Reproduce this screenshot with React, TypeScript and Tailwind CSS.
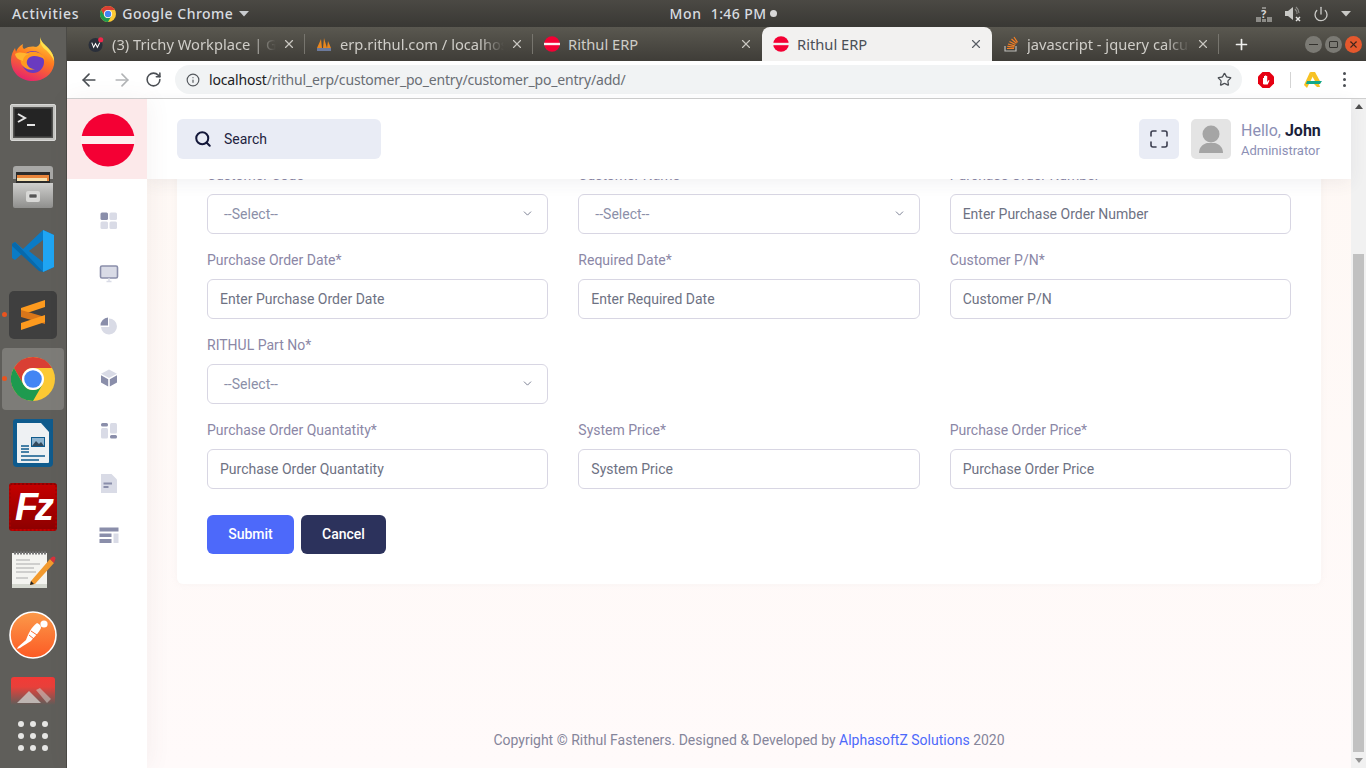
import { ArrowLeft, ArrowRight, RotateCw, Info, Star, X, Plus, Search, ChevronDown, Power } from "lucide-react";

const ui = { fontFamily: '"Noto Sans", sans-serif' };

function Caret({ className = "" }: { className?: string }) {
  return (
    <svg width="10" height="6" viewBox="0 0 10 6" className={className}>
      <path d="M0 0h10L5 5.500z" fill="currentColor" />
    </svg>
  );
}

function Rithul({ size = 16, band = "#fdf0f0" }: { size?: number; band?: string }) {
  return (
    <svg width={size} height={size} viewBox="0 0 54 54">
      <circle cx="27" cy="27" r="26.500" fill="#f40034" />
      <rect x="0" y="23" width="54" height="8" fill={band} />
    </svg>
  );
}

function ChromeLogo({ size = 44 }: { size?: number }) {
  return (
    <svg width={size} height={size} viewBox="0 0 48 48">
      <circle cx="24" cy="24" r="24" fill="#fcc934" />
      <path d="M24 0A24 24 0 0 1 44.78 12H24A12 12 0 0 0 13.6 30L3.2 12A24 24 0 0 1 24 0z" fill="#d93f34" />
      <path d="M3.2 12L13.6 30A12 12 0 0 0 34.4 30L24 48A24 24 0 0 1 3.2 12z" fill="#1e9a4f" />
      <circle cx="24" cy="24" r="12" fill="#fff" />
      <circle cx="24" cy="24" r="9.6" fill="#4285f4" />
    </svg>
  );
}

function Firefox() {
  return (
    <svg width="46" height="46" viewBox="0 0 46 46">
      <defs>
        <linearGradient id="ff1" x1="0.7" y1="0" x2="0.3" y2="1">
          <stop offset="0" stopColor="#ffd83a" />
          <stop offset="0.45" stopColor="#ff7a1f" />
          <stop offset="1" stopColor="#e5206f" />
        </linearGradient>
      </defs>
      <path d="M30 1c1 5 4 7 8 11 5 5 7 11 6 17-2 10-11 16-21 16C11 45 1 37 1 24c0-5 2-9 4-12l1 4c1-3 3-6 7-8-1 3 0 4 1 5 4-3 10-3 12-2C31 9 31 5 30 1z" fill="url(#ff1)" />
      <path d="M30 1c1 5 4 7 8 11 4 4 6 8 6 13-2-5-5-8-8-11-3-2-6-5-6-13z" fill="#ffe14d" />
      <circle cx="23" cy="26" r="11" fill="#6a3bc0" />
      <path d="M12 21c3-4 9-6 14-5 5 1 8 4 9 8-3-3-7-4-11-4-5 0-8 4-7 8 1 3 4 5 8 5-6 2-12-1-14-6-1-2 0-4 1-6z" fill="#ff9a1f" />
      <path d="M5 18c1 5 5 6 8 7 0-3 2-6 6-7-5-1-9-3-14 0z" fill="#ffb52e" />
    </svg>
  );
}

function Terminal() {
  return (
    <svg width="46" height="38" viewBox="0 0 46 38">
      <rect x="0.500" y="0.500" width="45" height="36" rx="1.500" fill="#c4c4c1" stroke="#d8d8d6" />
      <rect x="3" y="3" width="40" height="31" fill="#525250" />
      <rect x="4.500" y="4.500" width="37" height="28" fill="#242424" />
      <path d="M8 10l7 4-7 4" fill="none" stroke="#e6e6e6" strokeWidth="2" />
      <rect x="17" y="20" width="8" height="2" fill="#e6e6e6" />
    </svg>
  );
}

function Files() {
  return (
    <svg width="42" height="44" viewBox="0 0 42 44">
      <defs>
        <linearGradient id="fl" x1="0" y1="0" x2="0" y2="1">
          <stop offset="0" stopColor="#cfcfcd" />
          <stop offset="1" stopColor="#8f8f8d" />
        </linearGradient>
      </defs>
      <path d="M1 4q0-3 3-3h34q3 0 3 3v10H1z" fill="#a8a8a6" />
      <rect x="4" y="7" width="34" height="14" fill="#2b2b2b" />
      <rect x="5" y="10" width="32" height="6" fill="#e8843a" />
      <rect x="5" y="13" width="30" height="3" fill="#f5e1b0" />
      <path d="M1 18h40v23q0 2-2 2H3q-2 0-2-2z" fill="url(#fl)" />
      <rect x="14" y="26" width="14" height="11" rx="2" fill="#d8d8d6" />
      <rect x="17" y="29" width="8" height="4" rx="1" fill="#555" stroke="#eee" strokeWidth="0.6" />
    </svg>
  );
}

function VSCode() {
  return (
    <svg width="44" height="44" viewBox="0 0 44 44">
      <path d="M32 1L43 6v32l-11 5-20-19L4 31l-3-2V15l3-2 8 7z" fill="#0a7bc6" />
      <path d="M32 1L43 6v32l-11 5z" fill="#1fa5f3" />
      <path d="M32 11L18 22l14 11z" fill="#5f5e5a" />
      <path d="M1 15l3-2 28 30-4-1L1 17z" fill="#0869ab" />
    </svg>
  );
}

function Sublime() {
  return (
    <div className="flex h-12 w-12 items-center justify-center rounded-[5px] bg-[#3f3f3f]">
      <svg width="26" height="32" viewBox="0 0 26 32">
        <path d="M1 9L25 1v7L1 16z" fill="#fd9a1e" />
        <path d="M1 11l24 7v7L1 18z" fill="#d9761a" />
        <path d="M1 24l24-8v7L1 31z" fill="#fd9a1e" />
      </svg>
    </div>
  );
}

function Writer() {
  return (
    <svg width="40" height="48" viewBox="0 0 40 48">
      <path d="M3 0h37v44q0 4-4 4H4q-4 0-4-4V3q0-3 3-3z" fill="#0f5b8d" />
      <path d="M4 4h24l8 9v30q0 1-1 1H5q-1 0-1-1z" fill="#eef1f3" />
      <path d="M28 0h12v14z" fill="#0f5b8d" />
      <path d="M8 27h8M8 30h8M8 33h8" stroke="#0f5b8d" strokeWidth="1.6" />
      <path d="M8 37h24M8 41h18" stroke="#0f5b8d" strokeWidth="1.6" />
      <rect x="18" y="18" width="14" height="10" fill="#0f5b8d" />
      <rect x="19" y="19" width="12" height="8" fill="#8fb4cf" />
      <path d="M19 27l4-5 3 3 2-2 3 4z" fill="#33495c" />
    </svg>
  );
}

function FileZilla() {
  return (
    <div className="flex h-12 w-12 items-center justify-center overflow-hidden rounded-[3px] border-2 border-dotted border-[#a80000] bg-gradient-to-b from-[#c40000] to-[#8e0000]">
      <span className="text-[38px] font-bold italic leading-none tracking-[-3px] text-white" style={{ fontFamily: '"Liberation Sans", sans-serif' }}>
        Fz
      </span>
    </div>
  );
}

function Gedit() {
  return (
    <svg width="46" height="40" viewBox="0 0 46 40">
      <rect x="2" y="2" width="35" height="35" fill="#f4f4f0" />
      <rect x="2" y="33" width="35" height="4" fill="#d5d8d0" />
      <path d="M4 2h32" stroke="#777" strokeWidth="3" strokeDasharray="2 1" />
      <path d="M6 9h14M6 13h24M6 17h18M6 21h20M6 27h12" stroke="#aaa" strokeWidth="1" />
      <path d="M21 30L40 8l4 4-19 21-5 1z" fill="#f29a2e" />
      <path d="M40 8l2-2q2-1 3 0t0 3l-1 3z" fill="#d8323c" />
      <path d="M21 30l-1 4 4-1z" fill="#222" />
    </svg>
  );
}

function Postman() {
  return (
    <svg width="48" height="48" viewBox="0 0 48 48">
      <defs>
        <linearGradient id="pm" x1="0" y1="0" x2="0" y2="1">
          <stop offset="0" stopColor="#fb9a4a" />
          <stop offset="1" stopColor="#fc5a24" />
        </linearGradient>
      </defs>
      <circle cx="24" cy="24" r="23" fill="url(#pm)" stroke="#fff" strokeWidth="1.6" />
      <circle cx="35" cy="13" r="3.6" fill="#fff" />
      <path d="M28 12c3 1 4 3 4 5-2 5-7 9-10 13-3 2-7 4-11 7l-3 1 1-2 8-7c2-5 5-13 11-17z" fill="#fff" />
      <path d="M22 20l6 4M20 24l5 4" stroke="#fc6a30" strokeWidth="1" />
    </svg>
  );
}

function Mountain() {
  return (
    <svg width="44" height="28" viewBox="0 0 44 28">
      <defs>
        <linearGradient id="mf" x1="0" y1="0" x2="0" y2="1">
          <stop offset="0" stopColor="#f23a36" />
          <stop offset="0.35" stopColor="#e8403a" />
          <stop offset="1" stopColor="#5f5e5a" />
        </linearGradient>
      </defs>
      <path d="M0 3q0-3 3-3h38q3 0 3 3v25H0z" fill="url(#mf)" />
      <path d="M6 26l12-12 12 12z" fill="#c9c6c2" opacity="0.85" />
      <path d="M25 13l4-2 11 11-4 4z" fill="#c9c6c2" opacity="0.6" />
    </svg>
  );
}

const D = "#8a8eaa";
const L = "#d9dbe6";

function SideIcon({ n }: { n: number }) {
  const s = { width: 20, height: 20, viewBox: "0 0 20 20" };
  if (n === 0)
    return (
      <svg {...s}>
        <rect x="1.500" y="1.500" width="7.500" height="7.500" rx="1.500" fill={D} />
        <rect x="10.500" y="1.500" width="7.500" height="7.500" rx="1.500" fill={L} />
        <rect x="1.500" y="10.500" width="7.500" height="7.500" rx="1.500" fill={L} />
        <rect x="10.500" y="10.500" width="7.500" height="7.500" rx="1.500" fill={L} />
      </svg>
    );
  if (n === 1)
    return (
      <svg {...s}>
        <rect x="1.500" y="3" width="17" height="12" rx="1.500" fill={L} stroke={D} strokeWidth="1.6" />
        <path d="M10 15v3M7.500 18.500h5" stroke={L} strokeWidth="1.4" />
      </svg>
    );
  if (n === 2)
    return (
      <svg {...s}>
        <path d="M10 2.500a8 8 0 1 1-8 8.500h8.200z" fill={L} />
        <path d="M9 1.500v8H1.500A8 8 0 0 1 9 1.500z" fill={D} />
      </svg>
    );
  if (n === 3)
    return (
      <svg {...s}>
        <path d="M10 1.500l8 4.200L10 10 2 5.700z" fill={L} />
        <path d="M2 7.200l7.200 4v7.300L2 14.500zM18 7.200l-7.200 4v7.300l7.200-4z" fill={D} />
      </svg>
    );
  if (n === 4)
    return (
      <svg {...s}>
        <rect x="2" y="2" width="7" height="3.600" rx="1.500" fill={D} />
        <rect x="2" y="7" width="7" height="10.500" rx="1.500" fill={L} />
        <rect x="11" y="2" width="7" height="10.500" rx="1.500" fill={L} />
        <rect x="11" y="14" width="7" height="3.600" rx="1.500" fill={D} />
      </svg>
    );
  if (n === 5)
    return (
      <svg {...s}>
        <path d="M2 1h10.500L18 6.500V20H2z" fill={L} />
        <rect x="4.500" y="9.500" width="8.500" height="2" fill={D} />
        <rect x="4.500" y="13" width="5" height="2" fill={D} />
      </svg>
    );
  return (
    <svg {...s}>
      <rect x="0.500" y="1.500" width="19" height="4" fill={D} />
      <rect x="0.500" y="7.500" width="12" height="3.500" fill={D} />
      <rect x="0.500" y="13" width="12" height="4" fill={D} />
      <rect x="14.500" y="7.500" width="5" height="9.500" fill={L} />
    </svg>
  );
}

function Tab({ title, icon, active, width, sep = true }: { title: string; icon: React.ReactNode; active?: boolean; width: number; sep?: boolean }) {
  return (
    <div
      className={`relative flex h-[34px] shrink-0 items-center pl-[11px] pr-[9px] ${active ? "rounded-t-[8px] bg-[#f2f1f0] text-[#4a4f57]" : "text-[#cfcdc8]"}`}
      style={{ width }}
    >
      <div className="flex w-[16px] shrink-0 items-center justify-center">{icon}</div>
      <div className={`ml-[8px] min-w-0 flex-1 overflow-hidden whitespace-nowrap text-[14.7px] leading-[31px] ${title.length > 12 ? "[mask-image:linear-gradient(to_right,black_85%,transparent)]" : ""}`}>
        {title}
      </div>
      <X size={14} strokeWidth={2} className={`ml-[6px] shrink-0 ${active ? "text-[#5a5f66]" : "text-[#c8c6c0]"}`} />
      {sep && !active && <div className="absolute right-0 top-[7px] h-[20px] w-px bg-[#77756e]" />}
    </div>
  );
}

function Field({ label, placeholder, select }: { label: string; placeholder: string; select?: boolean }) {
  return (
    <div className="mt-[16px]">
      <div className="mb-[8px] h-[21px] text-[14px] leading-[21px] text-[#8b87a6]">{label}</div>
      {select ? (
        <div className="flex h-[40px] items-center justify-between rounded-[6px] border border-[#d8d6e3] bg-white pl-[16px] pr-[13px] text-[14px] text-[#8b8fa8]">
          <span>{placeholder}</span>
          <ChevronDown size={13} strokeWidth={1.6} className="mb-[2px] text-[#6a6f85]" />
        </div>
      ) : (
        <input
          readOnly
          placeholder={placeholder}
          className="block h-[40px] w-full rounded-[6px] border border-[#d8d6e3] bg-white px-[12px] text-[14px] outline-none placeholder:text-[#6e7283]"
        />
      )}
    </div>
  );
}

function App() {
  return (
    <div className="flex h-screen w-full flex-col overflow-hidden bg-[#5f5e5a]" style={{ fontFamily: "Roboto, sans-serif" }}>
      {/* GNOME top bar */}
      <div className="flex h-[27px] shrink-0 items-center bg-gradient-to-b from-[#4b4944] to-[#393834] text-[14px] font-medium tracking-[0.7px] text-[#d8dce0]" style={ui}>
        <span className="ml-[12px]">Activities</span>
        <div className="ml-[21px]"><ChromeLogo size={16} /></div>
        <span className="ml-[6px] tracking-[0.5px]">Google Chrome</span>
        <Caret className="ml-[6px] text-[#c9cccf]" />
        <div className="ml-[420px] flex items-center">
          <span>Mon</span>
          <span className="ml-[9px] tracking-[0.4px]">1:46 PM</span>
          <span className="ml-[4px] h-[7px] w-[7px] rounded-full bg-[#d8d8d8]" />
        </div>
        <div className="ml-auto mr-[15px] flex items-center text-[#c9c9c6]">
          <svg width="16" height="16" viewBox="0 0 16 16">
            <path d="M0 11h5v5H0zM6 13h4v3H6zM11 11h5v5h-5zM6 1h4v2H6z" fill="#8c8b87" />
            <text x="5" y="12" fontSize="11" fontWeight="700" fill="#d8d8d6">?</text>
          </svg>
          <svg width="18" height="16" viewBox="0 0 18 16" className="ml-[12px]">
            <path d="M1 5h3l5-4v13L4 10H1z" fill="#c9c9c6" />
            <path d="M11 3a6 6 0 0 1 2 5M12 1a8 8 0 0 1 3 6" stroke="#8c8b87" strokeWidth="1.2" fill="none" />
            <path d="M12 11l4 4M16 11l-4 4" stroke="#e4e4e2" strokeWidth="1.5" />
          </svg>
          <Power size={16} strokeWidth={2} className="ml-[11px]" />
          <Caret className="ml-[12px]" />
        </div>
      </div>

      <div className="flex min-h-0 flex-1">
        {/* Dock */}
        <div className="flex w-[67px] shrink-0 flex-col overflow-hidden border-r border-[#4a4945] bg-[#5f5e5a]">
          <div className="flex h-[64px] items-center justify-center"><Firefox /></div>
          <div className="flex h-[64px] items-center justify-center"><Terminal /></div>
          <div className="flex h-[64px] items-center justify-center"><Files /></div>
          <div className="flex h-[64px] items-center justify-center"><VSCode /></div>
          <div className="relative flex h-[64px] items-center justify-center">
            <Sublime />
            <span className="absolute left-[2px] top-[29px] h-[5px] w-[5px] rounded-full bg-[#e9541f]" />
          </div>
          <div className="relative flex h-[64px] items-center justify-center">
            <div className="flex h-[62px] w-[62px] items-center justify-center rounded-[4px] bg-[#7d7c78]"><ChromeLogo /></div>
            <span className="absolute left-[2px] top-[29px] h-[5px] w-[5px] rounded-full bg-[#e9541f]" />
          </div>
          <div className="flex h-[64px] items-center justify-center"><Writer /></div>
          <div className="flex h-[64px] items-center justify-center"><FileZilla /></div>
          <div className="flex h-[64px] items-center justify-center"><Gedit /></div>
          <div className="flex h-[64px] items-center justify-center"><Postman /></div>
          <div className="flex h-[38px] items-start justify-center pt-[10px]"><Mountain /></div>
          <div className="grid grid-cols-3 justify-items-center gap-y-[6px] px-[15px] pt-[16px]">
            {Array.from({ length: 9 }).map((_, i) => (
              <span key={i} className="h-[6px] w-[6px] rounded-full bg-[#e6e6e4]" />
            ))}
          </div>
        </div>

        {/* Chrome window */}
        <div className="flex min-w-0 flex-1 flex-col">
          <div className="flex h-[34px] shrink-0 items-center bg-gradient-to-b from-[#5a5850] to-[#3f3d38] pl-[10px]" style={ui}>
            <Tab
              width={228}
              title="(3) Trichy Workplace | Gr"
              icon={
                <svg width="17" height="17" viewBox="0 0 17 17">
                  <circle cx="8" cy="9" r="7.500" fill="#2a2f3a" />
                  <path d="M4 6.500l2 5 2-4 2 4 2.500-5" fill="none" stroke="#fff" strokeWidth="1.100" />
                  <circle cx="13.500" cy="3.500" r="2.700" fill="#f0284a" />
                </svg>
              }
            />
            <Tab
              width={228}
              title="erp.rithul.com / localhost"
              icon={
                <svg width="16" height="16" viewBox="0 0 16 16">
                  <path d="M1 12L5 3l1 9zM7 12l1-10 3 10zM11 12l1-7 3 7z" fill="#e8861e" />
                  <rect x="1" y="12" width="14" height="3" fill="#6c7a9c" />
                </svg>
              }
            />
            <Tab width={229} title="Rithul ERP" icon={<Rithul />} sep={false} />
            <Tab width={230} title="Rithul ERP" icon={<Rithul band="#f2f1f0" />} active />
            <Tab
              width={227}
              title="javascript - jquery calcul"
              icon={
                <svg width="16" height="16" viewBox="0 0 16 16">
                  <path d="M2 10v5h11v-5" fill="none" stroke="#bcbbb8" strokeWidth="1.2" />
                  <path d="M4 12.500h7M4.300 10.300l7 .8M5 8l6.800 1.800M6.500 5.500l6 3M8.500 3l5 4.300M11 1l3.500 5.300" stroke="#f47f24" strokeWidth="1.2" />
                </svg>
              }
            />
            <Plus size={17} strokeWidth={2.4} className="ml-[14px] text-[#f0f0ee]" />
            <div className="ml-auto mr-[4px] flex items-center gap-[3px]">
              <span className="flex h-[17px] w-[17px] items-center justify-center rounded-full bg-[#7b7a74]"><span className="h-px w-[9px] bg-[#33322e]" /></span>
              <span className="flex h-[17px] w-[17px] items-center justify-center rounded-full bg-[#7b7a74]"><span className="h-[7px] w-[9px] rounded-[1px] border border-[#33322e]" /></span>
              <span className="flex h-[17px] w-[17px] items-center justify-center rounded-full bg-[#e5582d]"><X size={11} strokeWidth={2.4} className="text-[#41251b]" /></span>
            </div>
          </div>

          {/* Toolbar */}
          <div className="flex h-[38px] shrink-0 items-center border-b border-[#cfcfcf] bg-white" style={ui}>
            <ArrowLeft size={20} strokeWidth={2} className="ml-[12px] text-[#4b4f54]" />
            <ArrowRight size={20} strokeWidth={2} className="ml-[13px] text-[#b2b4b6]" />
            <RotateCw size={17} strokeWidth={2.2} className="ml-[13px] text-[#4b4f54]" />
            <div className="ml-[13px] flex h-[29px] w-[1067px] items-center rounded-full bg-[#f1f3f4]">
              <Info size={14} strokeWidth={2} className="ml-[11px] text-[#55595e]" />
              <span className="ml-[9px] text-[14px] tracking-[-0.17px] text-[#6a6e74]">
                <span className="text-[#202124]">localhost</span>/rithul_erp/customer_po_entry/customer_po_entry/add/
              </span>
              <Star size={15} strokeWidth={2} className="ml-auto mr-[10px] text-[#4b4f54]" />
            </div>
            <svg width="18" height="18" viewBox="0 0 18 18" className="ml-[15px]">
              <path d="M5.500 1h7L17 5.500v7L12.500 17h-7L1 12.500v-7z" fill="#e60012" />
              <path d="M6 13V7h1v3V5h1v5V4.500h1.200V10V5h1v6l1.500-2 .8.5-1.800 4H7z" fill="#fff" />
            </svg>
            <div className="ml-[15px] h-[16px] w-px bg-[#d4d4d4]" />
            <svg width="20" height="18" viewBox="0 0 20 18" className="ml-[12px]">
              <path d="M7 1h5l6 11h-5z" fill="#f7c224" />
              <path d="M7 1L1 14l3 3L10 5z" fill="#f7c224" />
              <path d="M4 10h15l-2 3H3z" fill="#14a88a" />
              <path d="M11 13h5l1 3h-3z" fill="#f7c224" />
            </svg>
            <div className="ml-[20px] flex flex-col gap-[3px]">
              <span className="h-[3px] w-[3px] rounded-full bg-[#4b4f54]" />
              <span className="h-[3px] w-[3px] rounded-full bg-[#4b4f54]" />
              <span className="h-[3px] w-[3px] rounded-full bg-[#4b4f54]" />
            </div>
          </div>

          {/* Page */}
          <div className="flex min-h-0 flex-1">
            <div className="relative z-20 flex w-[80px] shrink-0 flex-col bg-white shadow-[2px_0_22px_rgba(120,90,90,0.07)]">
              <div className="flex h-[80px] items-center justify-center bg-[#fce9ea] pl-[1px] pt-[1px]"><Rithul size={54} band="#fdeff0" /></div>
              <div className="flex flex-col items-center gap-[32.5px] pl-[3px] pt-[31.5px]">
                {[0, 1, 2, 3, 4, 5, 6].map((n) => (
                  <div key={n} className="h-[20px] w-[20px]"><SideIcon n={n} /></div>
                ))}
              </div>
            </div>

            <div className="flex min-w-0 flex-1 flex-col bg-gradient-to-b from-[#fef8f4] to-[#fffafa]">
              <div className="relative z-10 flex h-[80px] shrink-0 items-center bg-white px-[30px] shadow-[0_4px_16px_rgba(60,60,90,0.07)]">
                <div className="flex h-[40px] w-[204px] items-center rounded-[6px] bg-[#e9ecf5] pl-[17px] text-[14px] text-[#1e2340]">
                  <Search size={18} strokeWidth={2.7} className="text-[#14183a]" />
                  <span className="ml-[12px]">Search</span>
                </div>
                <div className="ml-auto flex h-[40px] w-[40px] items-center justify-center rounded-[5px] bg-[#e9ecf5]">
                  <svg width="18" height="18" viewBox="0 0 18 18" fill="none" stroke="#3c3f50" strokeWidth="1.6" strokeLinecap="round">
                    <path d="M1 6V3a2 2 0 0 1 2-2h3M12 1h3a2 2 0 0 1 2 2v3M17 12v3a2 2 0 0 1-2 2h-3M6 17H3a2 2 0 0 1-2-2v-3" />
                  </svg>
                </div>
                <div className="ml-[12px] flex h-[40px] w-[40px] items-center justify-center overflow-hidden rounded-[5px] bg-[#e4e4e4]">
                  <svg width="26" height="28" viewBox="0 0 26 28">
                    <circle cx="13" cy="9" r="8.500" fill="#a5a5a5" />
                    <path d="M1 28c0-6 4-9 8-10h8c4 1 8 4 8 10z" fill="#a5a5a5" />
                  </svg>
                </div>
                <div className="ml-[10px] flex w-[80px] flex-col pt-[2px]">
                  <div className="h-[22px] whitespace-nowrap text-[16px] leading-[22px] text-[#8c8fb5]">
                    Hello, <span className="font-bold text-[#1b1f3b]">John</span>
                  </div>
                  <div className="whitespace-nowrap text-[13px] leading-[18px] text-[#8c8fb5]">Administrator</div>
                </div>
              </div>

              <div className="flex min-h-0 flex-1 flex-col overflow-hidden px-[30px]">
                <div className="mt-[-45px] rounded-[6px] bg-white px-[30px] pb-[30px] pt-[15px] shadow-[0_0_6px_rgba(200,190,190,0.12)]">
                  <div className="grid grid-cols-3 gap-x-[30px]">
                    <Field label="Customer Code" placeholder="--Select--" select />
                    <Field label="Customer Name" placeholder="--Select--" select />
                    <Field label="Purchase Order Number" placeholder="Enter Purchase Order Number" />
                    <Field label="Purchase Order Date*" placeholder="Enter Purchase Order Date" />
                    <Field label="Required Date*" placeholder="Enter Required Date" />
                    <Field label="Customer P/N*" placeholder="Customer P/N" />
                    <Field label="RITHUL Part No*" placeholder="--Select--" select />
                    <div />
                    <div />
                    <Field label="Purchase Order Quantatity*" placeholder="Purchase Order Quantatity" />
                    <Field label="System Price*" placeholder="System Price" />
                    <Field label="Purchase Order Price*" placeholder="Purchase Order Price" />
                  </div>
                  <div className="mt-[26px] flex gap-[7px]">
                    <button className="h-[39px] w-[87px] rounded-[6px] bg-[#4d69fa] text-[14px] font-medium text-white">Submit</button>
                    <button className="h-[39px] w-[85px] rounded-[6px] bg-[#2c325c] text-[14px] font-medium text-white">Cancel</button>
                  </div>
                </div>
                <div className="mt-auto pb-[17px] text-center text-[14px] leading-[21px] text-[#85859a]">
                  Copyright © Rithul Fasteners. Designed &amp; Developed by <span className="text-[#4d69fa]">AlphasoftZ Solutions</span> 2020
                </div>
              </div>
            </div>

            {/* Scrollbar */}
            <div className="flex w-[15px] shrink-0 flex-col items-center bg-[#f1f1f1]">
              <div className="flex h-[15px] items-center justify-center">
                <svg width="8" height="5" viewBox="0 0 8 5"><path d="M4 0l4 5H0z" fill="#505050" /></svg>
              </div>
              <div className="mt-[140px] h-[498px] w-[11px] bg-[#c1c1c1]" />
              <div className="mt-auto flex h-[15px] items-center justify-center">
                <svg width="8" height="5" viewBox="0 0 8 5"><path d="M4 5l4-5H0z" fill="#959595" /></svg>
              </div>
            </div>
          </div>
        </div>
      </div>
    </div>
  );
}

export default App;
